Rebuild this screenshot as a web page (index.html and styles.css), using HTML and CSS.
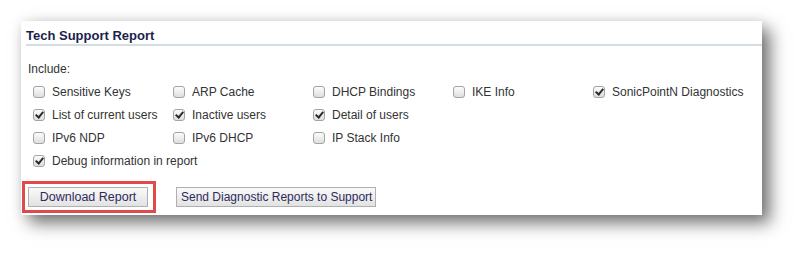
FILE: index.html
```html
<!doctype html>
<html>
<head>
<meta charset="utf-8">
<title>Tech Support Report</title>
<link rel="stylesheet" href="styles.css">
</head>
<body>
<div class="panel">
	<div class="title">Tech Support Report</div>
	<div class="include">Include:</div>
	<div class="row">
		<label class="opt"><span class="box"></span>Sensitive Keys</label>
		<label class="opt"><span class="box"></span>ARP Cache</label>
		<label class="opt"><span class="box"></span>DHCP Bindings</label>
		<label class="opt"><span class="box"></span>IKE Info</label>
		<label class="opt"><span class="box on"></span>SonicPointN Diagnostics</label>
	</div>
	<div class="row">
		<label class="opt"><span class="box on"></span>List of current users</label>
		<label class="opt"><span class="box on"></span>Inactive users</label>
		<label class="opt"><span class="box on"></span>Detail of users</label>
	</div>
	<div class="row">
		<label class="opt"><span class="box"></span>IPv6 NDP</label>
		<label class="opt"><span class="box"></span>IPv6 DHCP</label>
		<label class="opt"><span class="box"></span>IP Stack Info</label>
	</div>
	<div class="row">
		<label class="opt"><span class="box on"></span>Debug information in report</label>
	</div>
	<div class="actions">
		<div class="mark"><button class="btn dl">Download Report</button></div>
		<button class="btn send">Send Diagnostic Reports to Support</button>
	</div>
</div>
</body>
</html>
```
FILE: styles.css
```css
*{margin:0; padding:0; box-sizing:border-box;}
html,body{background:#fff;}
body{min-height:258px; padding-top:21px; font-family:"Liberation Sans", Arial, sans-serif; font-size:12px; color:#333;}
.panel{width:741px; height:194px; margin-left:21px; background:#fff; box-shadow:8px 8px 16px rgba(0,0,0,.55), 0 0 12px rgba(0,0,0,.08); padding-top:7px;}
.title{margin-left:5px; font-size:13px; font-weight:bold; color:#1c1f4d; line-height:15px; padding-bottom:1px; border-bottom:2px solid #d3dde3;}
.include{margin:16px 0 0 7px; font-size:12px; line-height:15px;}
.row{display:grid; grid-template-columns:repeat(5,140px); padding-left:12px; height:23px; align-items:center;}
.include + .row{margin-top:3px;}
.row:last-of-type{height:22px;}
.opt{display:flex; align-items:center; white-space:nowrap; font-size:12px;}
.box{flex-shrink:0; width:12px; height:12px; border:1px solid #a4a4a4; border-radius:3px; background:linear-gradient(#fcfcfc,#dedede); margin-right:7px; position:relative;}
.box.on::after{content:""; position:absolute; left:3px; top:0; width:3px; height:6px; border:solid #2b2b2b; border-width:0 2px 2px 0; transform:rotate(40deg);}
.actions{display:flex; align-items:center; margin-top:9px; padding-left:1px;}
.mark{border:3px solid #e04a4a; padding:3px 5px 3px 3px;}
.btn{height:20px; font-family:"Liberation Sans", Arial, sans-serif; font-size:12.5px; color:#2d2b5c; background:linear-gradient(#fafafa,#e2e2e2); border:1px solid #b0b0b0; white-space:nowrap; overflow:hidden;}
.dl{width:120px;}
.send{width:200px; margin-left:20px; text-align:left; padding-left:4px; font-size:12px;}
```
